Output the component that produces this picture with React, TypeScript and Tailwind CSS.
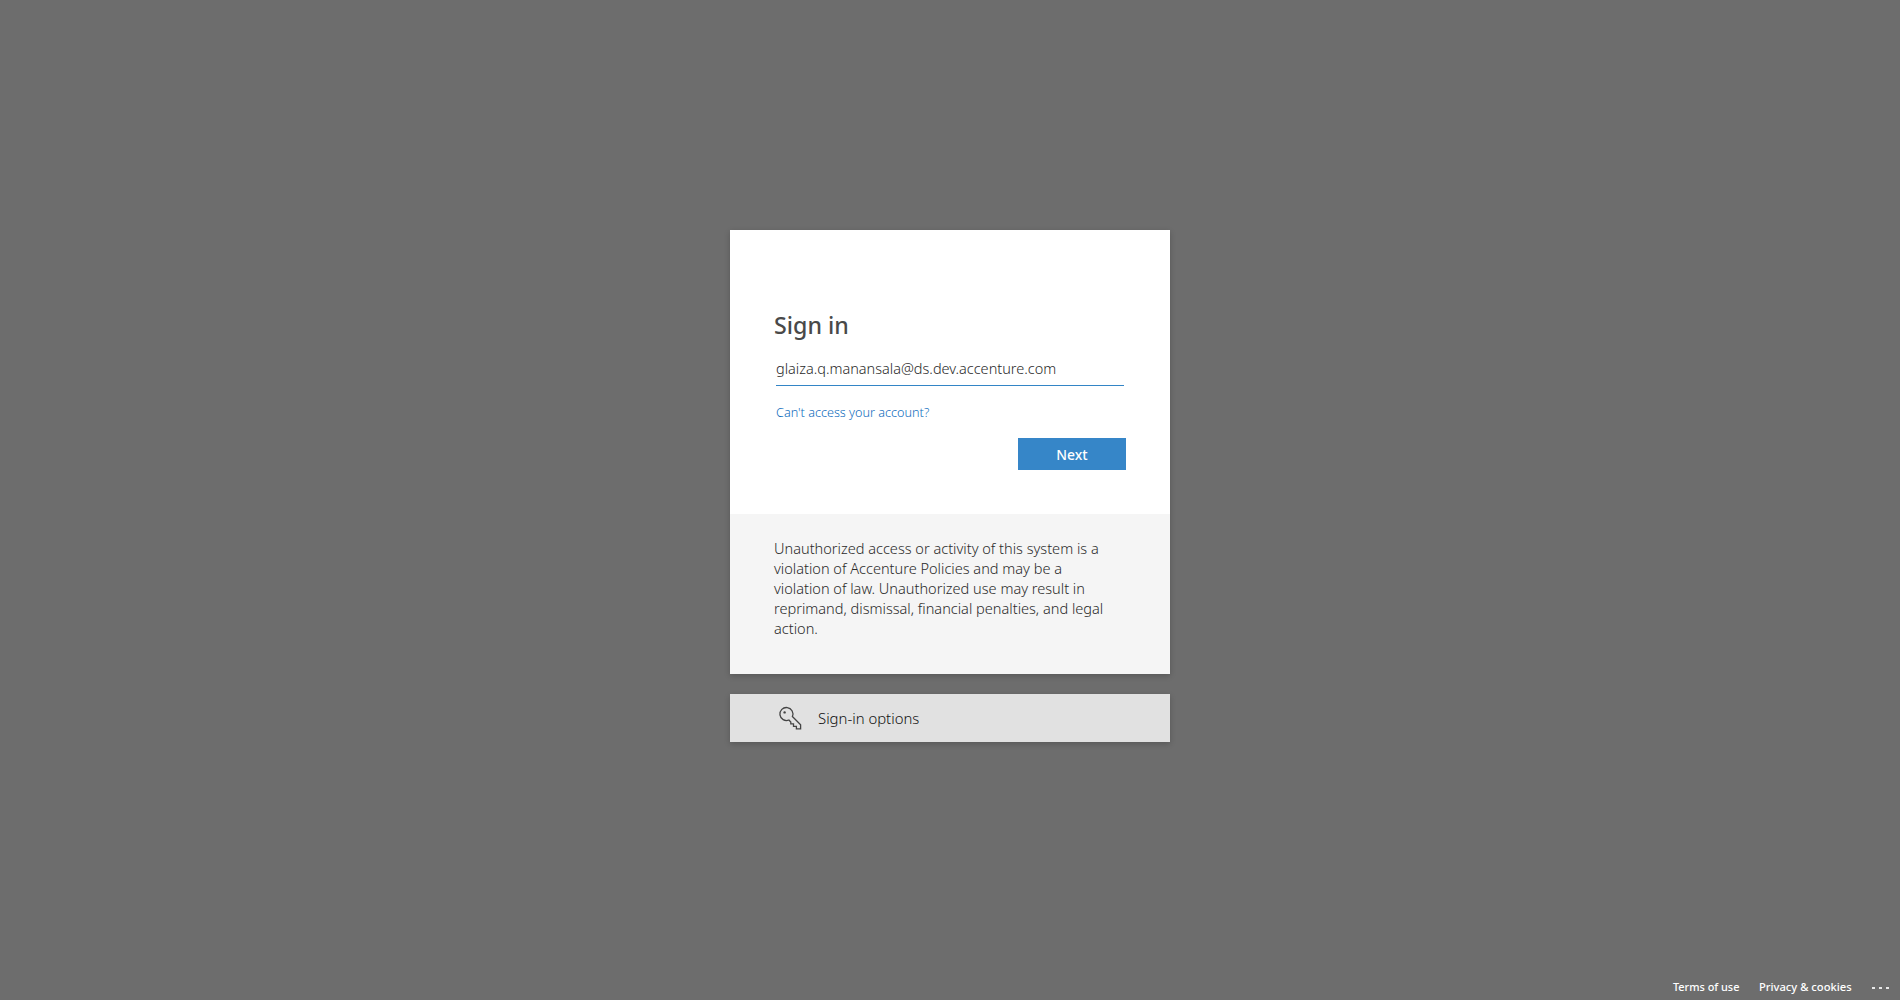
function KeyIcon() {
  return (
    <svg className="h-[24px] w-[24px]" viewBox="0 0 24 24" fill="none" stroke="#444444" strokeWidth="1.3" strokeLinejoin="miter">
      <path d="M14.4 10.5 L22.6 18.8 V22.8 H18.4 V20.4 H15.5 V17.8 H12.8 V16.1 L10.9 14 A6.5 6.5 0 1 1 14.4 10.5 Z" />
      <circle cx="6.6" cy="6.4" r="1.2" fill="#444444" stroke="none" />
    </svg>
  );
}

export default function App() {
  return (
    <div className="flex h-screen w-full flex-col overflow-hidden bg-[#6d6d6d] font-['Noto_Sans','Open_Sans',sans-serif] text-[#494949]">
      <main className="flex flex-1 flex-col items-center gap-5 pt-[230px]">
        <section className="w-[440px] bg-white shadow-[0_2px_6px_rgba(0,0,0,0.2)]">
          <div className="flex h-[284px] flex-col px-11 pt-[79px]">
            <h1 className="h-8 text-[23.2px] leading-8 font-medium whitespace-nowrap">Sign in</h1>
            <input
              className="mx-0.5 mt-[9px] h-9 border-b border-[#3385c6] pt-px text-[14.5px] font-light text-[#2a2a2a] outline-none"
              defaultValue="glaiza.q.manansala@ds.dev.accenture.com"
            />
            <a className="mt-4 h-5 pl-0.5 text-[12.65px] leading-5 font-light text-[#0f6dbd]">Can't access your account?</a>
            <button className="mt-4 h-8 w-[108px] self-end bg-[#3686c8] pt-0.5 text-[13.9px] font-medium text-white">Next</button>
          </div>
          <p className="h-[160px] bg-[#f5f5f5] px-11 pt-6 text-[14.55px] leading-5 font-light whitespace-nowrap text-[#2a2a2a]">
            Unauthorized access or activity of this system is a<br />
            violation of Accenture Policies and may be a<br />
            violation of law. Unauthorized use may result in<br />
            reprimand, dismissal, financial penalties, and legal<br />
            action.
          </p>
        </section>
        <section className="flex h-12 w-[440px] items-center bg-[#e1e1e1] pl-12 shadow-[0_2px_6px_rgba(0,0,0,0.2)]">
          <KeyIcon />
          <span className="ml-4 text-[14.9px] font-light text-[#111111]">Sign-in options</span>
        </section>
      </main>
      <footer className="flex h-7 items-center justify-end pt-0.5 text-white">
        <a className="w-[86px] text-[10.9px] font-medium whitespace-nowrap">Terms of use</a>
        <a className="w-[113px] text-[11.2px] font-medium whitespace-nowrap">Privacy &amp; cookies</a>
        <div className="mt-0.5 flex w-7 gap-1">
          <i className="h-0.5 w-[3px] bg-[#e8e8e8]" />
          <i className="h-0.5 w-[3px] bg-[#e8e8e8]" />
          <i className="h-0.5 w-[3px] bg-[#e8e8e8]" />
        </div>
      </footer>
    </div>
  );
}
